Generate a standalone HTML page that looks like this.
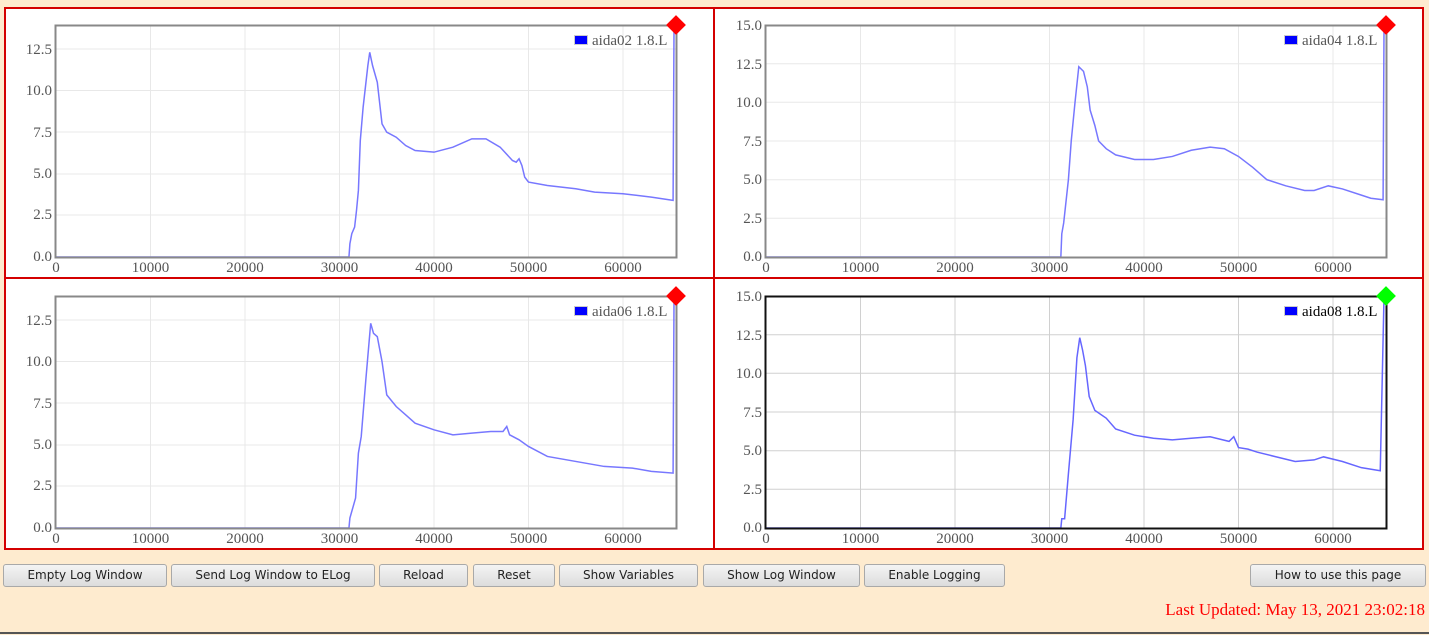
<!DOCTYPE html>
<html><head><meta charset="utf-8"><style>
html,body{margin:0;padding:0;background:#feebcf;width:1429px;height:635px;overflow:hidden;position:relative}
.b{position:absolute;top:564px;height:23px;box-sizing:border-box;border:1px solid #a9a9a9;border-radius:3px;background:linear-gradient(#f4f4f4,#dcdcdc);font:12px "DejaVu Sans",sans-serif;color:#222;text-align:center;line-height:21px}
#lu{position:absolute;right:4px;top:600px;font:17px "Liberation Serif",serif;color:#f00}
#ln{position:absolute;left:0;right:0;top:632px;height:2px;background:#555}
svg text{font-family:"Liberation Serif",serif;font-size:15px;fill:#555}
</style></head><body>
<svg width="1429" height="552" style="position:absolute;left:0;top:0">
<!-- panel 1 -->
<rect x="4" y="7" width="710" height="271" fill="#fff"/>
<g>
<g stroke="#e8e8e8"><line x1="150.5" y1="25" x2="150.5" y2="257"/><line x1="245" y1="25" x2="245" y2="257"/><line x1="339.5" y1="25" x2="339.5" y2="257"/><line x1="434" y1="25" x2="434" y2="257"/><line x1="528.5" y1="25" x2="528.5" y2="257"/><line x1="623" y1="25" x2="623" y2="257"/>
<line x1="56" y1="49" x2="677" y2="49"/><line x1="56" y1="90.5" x2="677" y2="90.5"/><line x1="56" y1="132" x2="677" y2="132"/><line x1="56" y1="174" x2="677" y2="174"/><line x1="56" y1="215" x2="677" y2="215"/></g>
<g text-anchor="end"><text x="52" y="54">12.5</text><text x="52" y="95">10.0</text><text x="52" y="137">7.5</text><text x="52" y="178">5.0</text><text x="52" y="219">2.5</text><text x="52" y="261">0.0</text></g>
<g text-anchor="middle"><text x="56" y="272">0</text><text x="150.5" y="272">10000</text><text x="245" y="272">20000</text><text x="339.5" y="272">30000</text><text x="434" y="272">40000</text><text x="528.5" y="272">50000</text><text x="623" y="272">60000</text></g>
<polyline transform="translate(56,257) scale(9.45,-16.64)" vector-effect="non-scaling-stroke" fill="none" stroke="#7777ff" stroke-width="1.5" points="0,0 31,0 31.1,0.8 31.3,1.4 31.6,1.8 31.8,2.8 32,4 32.2,7 32.5,9 33,11.5 33.2,12.3 33.5,11.5 34,10.5 34.5,8 35,7.5 36,7.2 37,6.7 38,6.4 40,6.3 42,6.6 44,7.1 45.5,7.1 47,6.6 48.3,5.8 48.7,5.7 49,5.9 49.3,5.5 49.6,4.8 50,4.5 52,4.3 55,4.1 57,3.9 60,3.8 63,3.6 65.3,3.4 65.4,13.9"/>
<rect x="55.5" y="25.5" width="621" height="232" fill="none" stroke="#888" stroke-width="2"/>
<rect x="574.5" y="35.5" width="13" height="9" fill="#00f" stroke="#ccc"/>
<text x="592" y="45">aida02 1.8.L</text>
<rect x="669" y="18" width="14" height="14" fill="#f00" transform="rotate(45 676 25)"/>
</g>
<!-- panel 2 -->
<rect x="714" y="7" width="710" height="271" fill="#fff"/>
<g transform="translate(710,0)">
<g stroke="#e8e8e8"><line x1="150.5" y1="25" x2="150.5" y2="257"/><line x1="245" y1="25" x2="245" y2="257"/><line x1="339.5" y1="25" x2="339.5" y2="257"/><line x1="434" y1="25" x2="434" y2="257"/><line x1="528.5" y1="25" x2="528.5" y2="257"/><line x1="623" y1="25" x2="623" y2="257"/>
<line x1="56" y1="63.7" x2="677" y2="63.7"/><line x1="56" y1="102.3" x2="677" y2="102.3"/><line x1="56" y1="141" x2="677" y2="141"/><line x1="56" y1="179.7" x2="677" y2="179.7"/><line x1="56" y1="218.3" x2="677" y2="218.3"/></g>
<g text-anchor="end"><text x="52" y="30">15.0</text><text x="52" y="69">12.5</text><text x="52" y="107">10.0</text><text x="52" y="146">7.5</text><text x="52" y="184">5.0</text><text x="52" y="223">2.5</text><text x="52" y="261">0.0</text></g>
<g text-anchor="middle"><text x="56" y="272">0</text><text x="150.5" y="272">10000</text><text x="245" y="272">20000</text><text x="339.5" y="272">30000</text><text x="434" y="272">40000</text><text x="528.5" y="272">50000</text><text x="623" y="272">60000</text></g>
<polyline transform="translate(56,257) scale(9.45,-15.47)" vector-effect="non-scaling-stroke" fill="none" stroke="#7777ff" stroke-width="1.5" points="0,0 31.2,0 31.3,1.5 31.5,2.2 32,5 32.3,7.5 32.7,10 33.1,12.3 33.6,12 34,11 34.3,9.5 34.8,8.5 35.2,7.5 36,7 37,6.6 39,6.3 41,6.3 43,6.5 45,6.9 47,7.1 48.5,7 50,6.5 51.5,5.8 53,5 55,4.6 57,4.3 58,4.3 59.5,4.6 61,4.4 63,4 64,3.8 65.3,3.7 65.4,15"/>
<rect x="55.5" y="25.5" width="621" height="232" fill="none" stroke="#888" stroke-width="2"/>
<rect x="574.5" y="35.5" width="13" height="9" fill="#00f" stroke="#ccc"/>
<text x="592" y="45">aida04 1.8.L</text>
<rect x="669" y="18" width="14" height="14" fill="#f00" transform="rotate(45 676 25)"/>
</g>
<!-- panel 3 -->
<rect x="4" y="278" width="710" height="271" fill="#fff"/>
<g transform="translate(0,271)">
<g stroke="#e8e8e8"><line x1="150.5" y1="25" x2="150.5" y2="257"/><line x1="245" y1="25" x2="245" y2="257"/><line x1="339.5" y1="25" x2="339.5" y2="257"/><line x1="434" y1="25" x2="434" y2="257"/><line x1="528.5" y1="25" x2="528.5" y2="257"/><line x1="623" y1="25" x2="623" y2="257"/>
<line x1="56" y1="49" x2="677" y2="49"/><line x1="56" y1="90.5" x2="677" y2="90.5"/><line x1="56" y1="132" x2="677" y2="132"/><line x1="56" y1="174" x2="677" y2="174"/><line x1="56" y1="215" x2="677" y2="215"/></g>
<g text-anchor="end"><text x="52" y="54">12.5</text><text x="52" y="95">10.0</text><text x="52" y="137">7.5</text><text x="52" y="178">5.0</text><text x="52" y="219">2.5</text><text x="52" y="261">0.0</text></g>
<g text-anchor="middle"><text x="56" y="272">0</text><text x="150.5" y="272">10000</text><text x="245" y="272">20000</text><text x="339.5" y="272">30000</text><text x="434" y="272">40000</text><text x="528.5" y="272">50000</text><text x="623" y="272">60000</text></g>
<polyline transform="translate(56,257) scale(9.45,-16.64)" vector-effect="non-scaling-stroke" fill="none" stroke="#7777ff" stroke-width="1.5" points="0,0 31,0 31.1,0.6 31.4,1.2 31.7,1.8 32,4.5 32.3,5.5 32.8,9 33.3,12.3 33.6,11.7 34,11.5 34.5,10 35,8 36,7.3 37,6.8 38,6.3 40,5.9 42,5.6 44,5.7 46,5.8 47.3,5.8 47.7,6.1 48,5.6 49,5.3 50,4.9 52,4.3 55,4 58,3.7 61,3.6 63,3.4 65.3,3.3 65.4,13.9"/>
<rect x="55.5" y="25.5" width="621" height="232" fill="none" stroke="#888" stroke-width="2"/>
<rect x="574.5" y="35.5" width="13" height="9" fill="#00f" stroke="#ccc"/>
<text x="592" y="45">aida06 1.8.L</text>
<rect x="669" y="18" width="14" height="14" fill="#f00" transform="rotate(45 676 25)"/>
</g>
<!-- panel 4 -->
<rect x="714" y="278" width="710" height="271" fill="#fff"/>
<g transform="translate(710,271)">
<g stroke="#d0d0d0"><line x1="150.5" y1="25" x2="150.5" y2="257"/><line x1="245" y1="25" x2="245" y2="257"/><line x1="339.5" y1="25" x2="339.5" y2="257"/><line x1="434" y1="25" x2="434" y2="257"/><line x1="528.5" y1="25" x2="528.5" y2="257"/><line x1="623" y1="25" x2="623" y2="257"/>
<line x1="56" y1="63.7" x2="677" y2="63.7"/><line x1="56" y1="102.3" x2="677" y2="102.3"/><line x1="56" y1="141" x2="677" y2="141"/><line x1="56" y1="179.7" x2="677" y2="179.7"/><line x1="56" y1="218.3" x2="677" y2="218.3"/></g>
<g text-anchor="end"><text x="52" y="30">15.0</text><text x="52" y="69">12.5</text><text x="52" y="107">10.0</text><text x="52" y="146">7.5</text><text x="52" y="184">5.0</text><text x="52" y="223">2.5</text><text x="52" y="261">0.0</text></g>
<g text-anchor="middle"><text x="56" y="272">0</text><text x="150.5" y="272">10000</text><text x="245" y="272">20000</text><text x="339.5" y="272">30000</text><text x="434" y="272">40000</text><text x="528.5" y="272">50000</text><text x="623" y="272">60000</text></g>
<polyline transform="translate(56,257) scale(9.45,-15.47)" vector-effect="non-scaling-stroke" fill="none" stroke="#6666ff" stroke-width="1.5" points="0,0 31.2,0 31.3,0.6 31.6,0.6 32,3.5 32.5,7 32.9,11 33.2,12.3 33.5,11.5 33.8,10.5 34.2,8.5 34.8,7.6 36,7.1 37,6.4 39,6 41,5.8 43,5.7 45,5.8 47,5.9 49,5.6 49.5,5.9 50,5.2 51,5.1 52,4.9 54,4.6 56,4.3 58,4.4 59,4.6 61,4.3 63,3.9 65,3.7 65.4,15"/>
<rect x="55.5" y="25.5" width="621" height="232" fill="none" stroke="#111" stroke-width="2"/>
<rect x="574.5" y="35.5" width="13" height="9" fill="#00f" stroke="#ccc"/>
<text x="592" y="45" style="fill:#000">aida08 1.8.L</text>
<rect x="669" y="18" width="14" height="14" fill="#0f0" transform="rotate(45 676 25)"/>
</g>
<g fill="none" stroke="#d40000" stroke-width="2">
<rect x="5" y="8" width="1418" height="541"/>
<line x1="714" y1="8" x2="714" y2="549"/>
<line x1="5" y1="278" x2="1423" y2="278"/>
</g>
</svg>
<div class="b" style="left:3px;width:164px">Empty Log Window</div>
<div class="b" style="left:171px;width:204px">Send Log Window to ELog</div>
<div class="b" style="left:379px;width:89px">Reload</div>
<div class="b" style="left:473px;width:82px">Reset</div>
<div class="b" style="left:559px;width:139px">Show Variables</div>
<div class="b" style="left:703px;width:157px">Show Log Window</div>
<div class="b" style="left:864px;width:141px">Enable Logging</div>
<div class="b" style="left:1250px;width:176px">How to use this page</div>
<div id="lu">Last Updated: May 13, 2021 23:02:18</div>
<div id="ln"></div>
</body></html>
